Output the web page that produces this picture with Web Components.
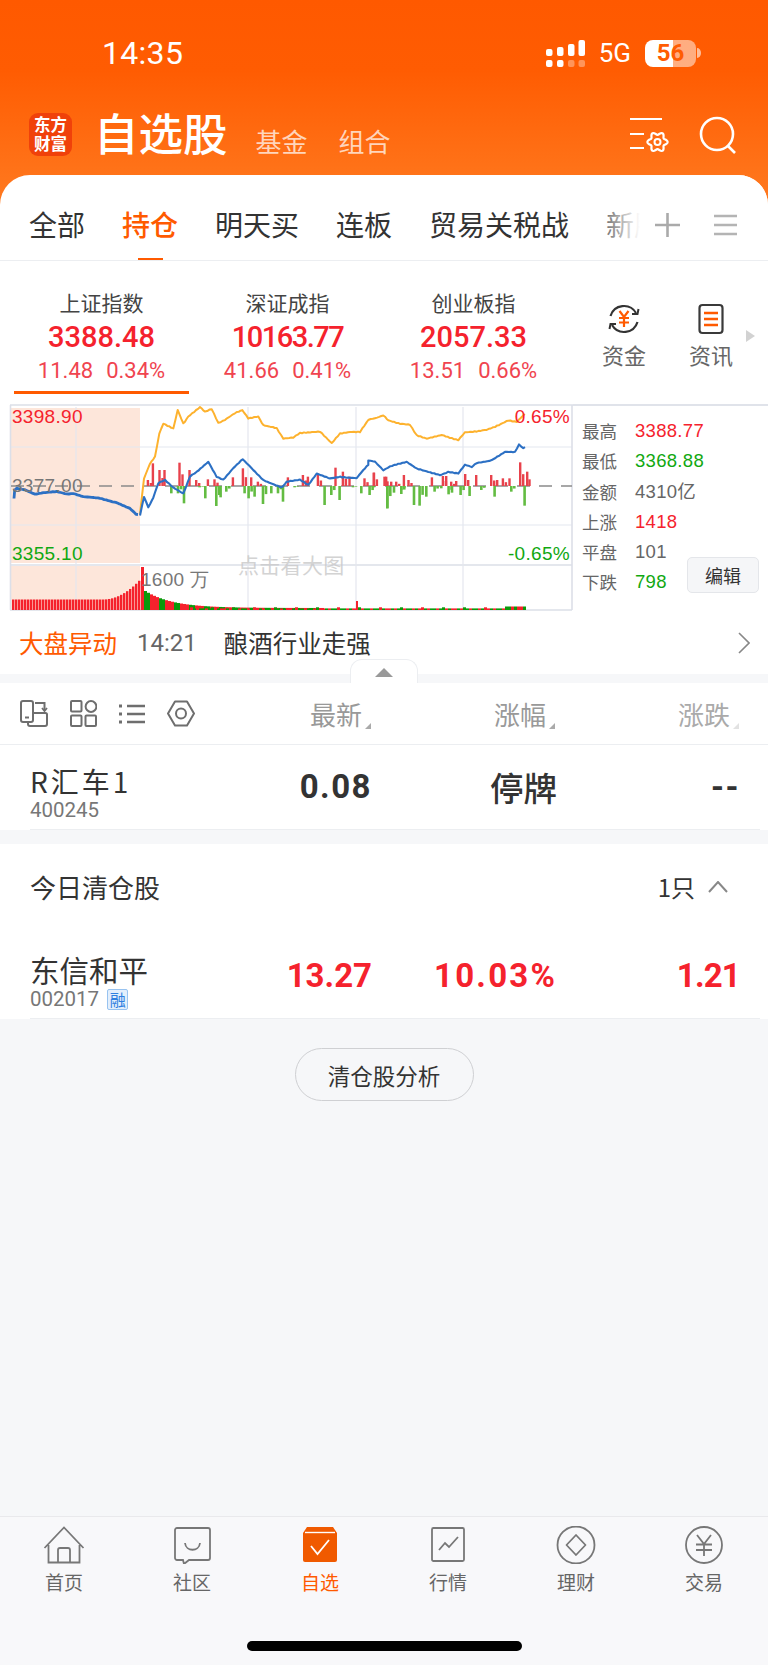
<!DOCTYPE html>
<html lang="zh">
<head>
<meta charset="utf-8">
<title>自选股</title>
<style>
  html, body { margin: 0; padding: 0; background: #f6f7f9; }
  body {
    width: 768px; height: 1665px; overflow: hidden;
    display: flex; flex-direction: column;
    font-family: "Noto Sans CJK SC", "Liberation Sans", sans-serif;
    color: #333;
  }
  .grow { flex: 1; }
</style>
</head>
<body>
  <app-top></app-top>
  <tab-strip></tab-strip>
  <index-board></index-board>
  <market-alert></market-alert>
  <list-head></list-head>
  <stock-row name="R汇车1" code="400245" price="0.08" pct="停牌" chg="--" tone="flat"></stock-row>
  <clear-head></clear-head>
  <stock-row name="东信和平" code="002017" price="13.27" pct="10.03%" chg="1.21" tone="up" badge="融" short></stock-row>
  <clear-button></clear-button>
  <div class="grow"></div>
  <bottom-nav></bottom-nav>

<script>
const NUM = '"Roboto", "Liberation Sans", sans-serif';
const CJK = '"Noto Sans CJK SC", "Liberation Sans", sans-serif';

// six lobed gear for the settings icon
function flowerPath(cx, cy) {
  let d = "";
  for (let i = 0; i <= 72; i++) {
    const t = i / 72 * Math.PI * 2;
    const r = 8.6 + 1.5 * Math.cos(6 * t);
    d += (i ? "L" : "M") + (cx + r * Math.cos(t)).toFixed(2) + " " + (cy + r * Math.sin(t)).toFixed(2);
  }
  return d + "z";
}

// status bar + orange title bar
class AppTop extends HTMLElement {
  constructor() {
    super();
    this.attachShadow({ mode: "open" }).innerHTML = `
    <style>
      :host { display: block; height: 205px; margin-bottom: -30px; color: #fff;
        background: linear-gradient(#ff5900 0, #ff5c02 70px, #ff7a20 205px); }
      .status { height: 105px; box-sizing: border-box; padding: 35px 67px 0 102px; display: flex; align-items: flex-start; justify-content: space-between; }
      .time { font: 400 32px/36px ${NUM}; letter-spacing: .3px; }
      .sys { display: flex; align-items: center; gap: 14px; height: 36px; }
      .net { font: 400 26px/36px ${NUM}; }
      .batt { display: flex; align-items: center; gap: 1px; }
      .cell { width: 51px; height: 27px; border-radius: 8px; font: 700 24px/27px ${NUM}; text-align: center; color: #ff5c02;
        background: linear-gradient(90deg, #fff 0 55%, rgba(255,255,255,.5) 55%); }
      .title { display: flex; align-items: center; height: 60px; padding: 0 31px 0 29px; }
      .logo { width: 43px; height: 43px; border-radius: 9px; background: #f0410a; color: #fff; margin: -2px 22px 0 0;
        font: 700 16.5px/19px "Noto Sans CJK SC", sans-serif; text-align: center; display: flex; align-items: center; justify-content: center; }
      h1 { margin: -6px 28px 0 0; font: 500 44.5px/60px ${CJK}; }
      .sub { font: 400 26px/43px ${CJK}; color: rgba(255,255,255,.72); margin-right: 31px; padding-top: 11px; height: 43px; }
      .icons { margin-left: auto; display: flex; align-items: center; gap: 30px; }
      svg { display: block; }
    </style>
    <div class="status">
      <span class="time">14:35</span>
      <div class="sys">
        <svg width="39" height="27" viewBox="0 0 39 27" fill="#fff">
          <rect x="0" y="9" width="6.500" height="7" rx="2"/><rect x="11" y="7" width="6.500" height="9" rx="2"/><rect x="22" y="4" width="6.500" height="12" rx="2"/><rect x="32.500" y="0" width="6.500" height="16" rx="2"/>
          <rect x="0" y="20" width="6.500" height="7" rx="2"/><rect x="11" y="20" width="6.500" height="7" rx="2"/><rect x="22" y="20" width="6.500" height="7" rx="2" opacity=".35"/><rect x="32.500" y="20" width="6.500" height="7" rx="2" opacity=".35"/>
        </svg>
        <span class="net">5G</span>
        <div class="batt"><span class="cell">56</span><svg width="4" height="10"><path d="M0 0a4 5 0 0 1 0 10z" fill="#fff" opacity=".6"/></svg></div>
      </div>
    </div>
    <div class="title">
      <div class="logo"><span>东方<br>财富</span></div>
      <h1>自选股</h1>
      <span class="sub">基金</span><span class="sub">组合</span>
      <div class="icons">
        <svg width="39" height="36" viewBox="0 0 39 36" fill="none" stroke="#fff" stroke-width="2.200">
          <path d="M0 2h32M0 17h14M0 31h14"/>
          <path d="${flowerPath(27.5, 25)}" stroke-linejoin="round"/>
          <circle cx="27.500" cy="25" r="3" stroke-width="2"/>
        </svg>
        <svg width="38" height="38" viewBox="0 0 38 38" fill="none" stroke="#fff" stroke-width="2.600">
          <circle cx="18" cy="18" r="16"/><path d="M29 30l7 7"/>
        </svg>
      </div>
    </div>`;
  }
}
customElements.define("app-top", AppTop);

// watchlist tabs on the white sheet
class TabStrip extends HTMLElement {
  constructor() {
    super();
    this.attachShadow({ mode: "open" }).innerHTML = `
    <style>
      :host { display: block; position: relative; height: 86px; background: #fff; border-radius: 30px 30px 0 0; box-sizing: border-box; border-bottom: 1px solid #eceef1; overflow: hidden; }
      .tabs { display: flex; gap: 37px; padding: 29px 0 0 29px; font: 400 28px/40px ${CJK}; color: #333; white-space: nowrap; }
      .on { color: #ff5a00; font-weight: 500; position: relative; }
      .on::after { content: ""; position: absolute; left: 16px; top: 54px; width: 25px; height: 3px; background: #ff5a00; }
      .fade { position: absolute; top: 0; left: 590px; right: 0; bottom: 0; background: linear-gradient(90deg, rgba(255,255,255,0), #fff 50px); }
      .tools { position: absolute; left: 655px; top: 38px; display: flex; gap: 34px; }
    </style>
    <div class="tabs"><span>全部</span><span class="on">持仓</span><span>明天买</span><span>连板</span><span>贸易关税战</span><span>新股</span></div>
    <div class="fade"></div>
    <div class="tools">
      <svg width="25" height="24" fill="none" stroke="#aaa" stroke-width="2.600"><path d="M0 12h25M12.500 0v24"/></svg>
      <svg width="23" height="24" fill="none" stroke="#b4b4b4" stroke-width="2.600"><path d="M0 3h23M0 12h23M0 21h23"/></svg>
    </div>`;
  }
}
customElements.define("tab-strip", TabStrip);

// one index summary in the top board
class IndexCard extends HTMLElement {
  constructor() {
    super();
    this.attachShadow({ mode: "open" }).innerHTML = `
    <style>
      :host { display: block; width: 186px; height: 133px; box-sizing: border-box; text-align: center; color: #f5222d; padding-top: 26px; }
      :host([active]) .wrap { border-bottom: 3px solid #ff5a00; }
      .wrap { width: 175px; margin-left: 14px; height: 107px; box-sizing: border-box; }
      .n { font: 400 21px/30px ${CJK}; color: #444; display: block; }
      .v { font: 500 29px/38px ${NUM}; display: block; margin-top: 1px; }
      .c { font: 400 22px/28px ${NUM}; display: flex; justify-content: center; gap: 13px; margin-top: 1px; color: #f0444f; }
    </style>
    <div class="wrap"><span class="n"></span><span class="v"></span><span class="c"><span class="d"></span><span class="p"></span></span></div>`;
  }
  connectedCallback() {
    const r = this.shadowRoot;
    r.querySelector(".n").textContent = this.getAttribute("name");
    const v = r.querySelector(".v");
    v.textContent = this.getAttribute("value");
    if (this.getAttribute("tight")) v.style.letterSpacing = this.getAttribute("tight") + "px";
    r.querySelector(".d").textContent = this.getAttribute("delta");
    r.querySelector(".p").textContent = this.getAttribute("pct");
  }
}
customElements.define("index-card", IndexCard);

// intraday mini chart, drawn on its own canvas
class MiniChart extends HTMLElement {
  constructor() {
    super();
    // a = points read off the left half of the chart, b = off the right half
    const a = (p) => p.map(([x, y]) => [x / 3, y / 3 - 4]);
    const b = (p) => p.map(([x, y]) => [370 + x / 3, y / 3 - 4]);
    const pts = (p, amp) => {
      const out = [];
      for (let i = 0; i < p.length - 1; i++) {
        const n = Math.max(1, Math.round((p[i + 1][0] - p[i][0]) / 2));
        for (let k = 0; k < n; k++) {
          const x = p[i][0] + (p[i + 1][0] - p[i][0]) * k / n;
          const y = p[i][1] + (p[i + 1][1] - p[i][1]) * k / n + amp * Math.sin(x * 2.3) * Math.cos(x * .9);
          out.push(x.toFixed(1) + "," + y.toFixed(1));
        }
      }
      return out.join(" ");
    };
    const pre = pts(a([[42,295],[44,270],[50,265],[75,270],[105,283],[130,278],[170,275],[200,282],[220,280],[250,290],[300,295],[350,308],[390,325],[408,342],[420,345]]), .3);
    const blue = pts(a([[420,345],[432,290],[445,322],[460,292],[475,250],[495,240],[520,262],[550,280],[570,230],[590,215],[625,185],[650,230],[670,240],[700,205],[728,178],[760,210],[790,240],[845,262],[860,245],[900,240],[925,255],[950,220],[990,235],[1020,230],[1070,235],[1090,210],[1105,195]])
      .concat(b([[-5,182],[15,185],[40,210],[60,200],[110,185],[140,205],[175,215],[210,225],[235,215],[265,220],[285,195],[305,200],[320,190],[345,185],[365,180],[405,155],[435,155],[447,133],[460,145],[470,137]])), .5);
    const orange = pts(a([[420,340],[432,235],[450,190],[465,170],[478,100],[490,70],[520,85],[533,30],[550,70],[565,50],[600,22],[615,35],[635,28],[655,68],[675,60],[705,40],[727,30],[745,55],[775,50],[790,75],[830,85],[850,115],[880,112],[900,100],[960,95],[995,130],[1020,100],[1050,95],[1080,95],[1100,68]])
      .concat(b([[-5,60],[15,55],[40,45],[55,62],[90,72],[120,75],[140,105],[170,115],[215,105],[265,120],[285,98],[320,95],[350,90],[375,80],[415,62],[440,65],[470,35]])), .6);

    // net inflow bars, read as [zoom x, zoom y of the bar end], baseline 258
    const redA = [[440,240],[455,190],[475,210],[490,210],[535,188],[565,210],[585,240],[620,238],[640,238],[695,232],[725,205],[750,232],[770,245],[860,232],[905,225],[920,230],[950,225],[1003,203],[1025,215],[1045,230],[1090,235],[1118,218],[1150,230],[1170,245]];
    const redB = [[8,218],[45,230],[75,245],[98,225],[112,240],[182,232],[215,228],[225,228],[240,245],[255,243],[282,222],[315,225],[360,225],[378,240],[395,235],[415,235],[447,187],[468,215],[475,238]];
    const grnA = [[510,280],[530,280],[548,310],[595,262],[612,295],[645,318],[658,292],[675,275],[730,280],[742,295],[760,290],[785,312],[810,280],[830,280],[845,305],[880,262],[970,315],[990,285],[1015,300],[1055,262],[1080,280],[1105,285],[1158,325],[1200,270]];
    const grnB = [[8,262],[48,325],[68,278],[90,282],[128,315],[145,317],[165,290],[190,275],[210,265],[232,283],[242,278],[268,285],[295,288],[330,270],[370,290],[420,275],[460,317]];
    const bar = (x, h, up, w) => `<rect x="${x.toFixed(1)}" y="${up ? 82 - h : 82}" width="${w}" height="${h}"/>`;
    let reds = "", greens = "";
    redA.map(p => [p[0] / 3, (258 - p[1]) / 3]).concat(redB.map(p => [370 + p[0] / 3, (258 - p[1]) / 3])).forEach(([x, h], i) => {
      reds += bar(x, h, true, 2.4);
      if (i < 42 && i % 2 === 0) reds += bar(x + 3, h * .5, true, 2.4);
    });
    grnA.map(p => [p[0] / 3, (p[1] - 258) / 3]).concat(grnB.map(p => [370 + p[0] / 3, (p[1] - 258) / 3])).forEach(([x, h], i) => {
      greens += bar(x, h, false, 2.6);
      if (i % 2 === 1) greens += bar(x + 3, h * .45, false, 2.6);
    });

    // volume histogram, baseline 206
    let vol = "";
    for (let i = 0; i < 43; i++) {
      const x = 12 + i * 3;
      const h = i < 30 ? 10.500 : 10.500 + (i - 30) * (i - 30) * .13;
      vol += `<rect x="${x}" y="${206 - h}" width="2.4" height="${h}" fill="#f5222d"/>`;
    }
    vol += `<rect x="141" y="163" width="3" height="43" fill="#f5222d"/>`;
    for (let i = 0; i < 60; i++) {
      const x = 144 + i * 3;
      const h = 2 + 17 * Math.exp(-i / 9);
      vol += `<rect x="${x}" y="${206 - h}" width="3" height="${h}" fill="${i === 0 || i % 5 < 2 ? "#0a9a0a" : "#f5222d"}"/>`;
    }
    for (let i = 0; i < 112; i++) {
      const x = 190 + i * 3;
      const h = i > 104 ? 3.500 : 1.600 + (i % 7 === 0 ? 1.100 : 0);
      vol += `<rect x="${x}" y="${206 - h}" width="3" height="${h}" fill="${(i * 7) % 11 < 5 ? "#f5222d" : "#0a9a0a"}"/>`;
    }
    vol += `<rect x="356" y="197" width="2" height="9" fill="#f5222d"/>`;

    this.attachShadow({ mode: "open" }).innerHTML = `
    <style>
      :host { display: block; width: 573px; height: 207px; flex: none; }
      svg { display: block; }
      text { font-family: "Liberation Sans", sans-serif; font-size: 19px; letter-spacing: .3px; }
    </style>
    <svg width="573" height="207" viewBox="0 0 573 207" fill="none">
      <rect x="11" y="4" width="129" height="155" fill="#fde6da"/>
      <rect x="11" y="162" width="129" height="44" fill="#fde6da"/>
      <g stroke="#e4e7ef" stroke-width="1.200">
        <path d="M76 3v157M248 3v157M356 3v157M463 3v157M76 162v44M248 162v44M356 162v44M463 162v44"/>
        <path d="M10 43h562M10 121h562"/>
      </g>
      <g stroke="#dcdfe8" stroke-width="1.600">
        <path d="M10 1h563M10 161h562M10 206h562M10.500 1v205M572 1v205"/>
      </g>
      <path d="M11 82h561" stroke="#8a8a8a" stroke-width="1.400" stroke-dasharray="13 9"/>
      <g fill="#e8424c">${reds}</g>
      <g fill="#63bc42">${greens}</g>
      <polyline points="${orange}" stroke="#fdb22e" stroke-width="2" stroke-linejoin="round"/>
      <polyline points="${blue}" stroke="#2c70c4" stroke-width="2.100" stroke-linejoin="round"/>
      <polyline points="${pre}" stroke="#2c70c4" stroke-width="2.800" stroke-linejoin="round"/>
      ${vol}
      <text x="12" y="18.500" fill="#f5222d">3398.90</text>
      <text x="12" y="87.500" fill="#777">3377.00</text>
      <text x="12" y="155.500" fill="#11a811">3355.10</text>
      <text x="570" y="18.500" fill="#f5222d" text-anchor="end">0.65%</text>
      <text x="570" y="155.500" fill="#11a811" text-anchor="end">-0.65%</text>
      <text x="141" y="181.500" fill="#777">1600 万</text>
      <text x="238" y="169" fill="#c9c9c9" style="font-family:'Noto Sans CJK SC',sans-serif;font-size:21px;opacity:.8">点击看大图</text>
    </svg>`;
  }
}
customElements.define("mini-chart", MiniChart);

// high / low / breadth list right of the chart
class StatList extends HTMLElement {
  constructor() {
    super();
    const rows = [["最高","3388.77","#f5222d"],["最低","3368.88","#11a811"],["金额","4310亿","#666"],["上涨","1418","#f5222d"],["平盘","101","#666"],["下跌","798","#11a811"]];
    this.attachShadow({ mode: "open" }).innerHTML = `
    <style>
      :host { display: block; position: relative; width: 195px; height: 207px; box-sizing: border-box; padding: 10px 0 0 9px; border-top: 2px solid #e0e3ea; }
      .r { display: flex; height: 30.300px; font: 400 17.500px/30px ${CJK}; color: #666; }
      .r b { width: 53px; font-weight: 400; }
      .r span { font-family: "Liberation Sans", "Noto Sans CJK SC", sans-serif; font-size: 18.500px; letter-spacing: .3px; }
      button { position: absolute; left: 114px; top: 151px; width: 72px; height: 36px; box-sizing: border-box; padding: 0; border: 1px solid #e4e6ea; border-radius: 5px; background: #f5f6f8; color: #333; font: 400 18px/34px ${CJK}; }
    </style>
    ${rows.map(r => `<div class="r"><b>${r[0]}</b><span style="color:${r[2]}">${r[1]}</span></div>`).join("")}
    <button>编辑</button>`;
  }
}
customElements.define("stat-list", StatList);

class IndexBoard extends HTMLElement {
  constructor() {
    super();
    this.attachShadow({ mode: "open" }).innerHTML = `
    <style>
      :host { display: block; position: relative; background: #fff; }
      .top { display: flex; height: 143px; }
      .gap { width: 22.500px; }
      .tool { width: 87px; text-align: center; padding-top: 42px; font: 400 22px/30px ${CJK}; color: #666; box-sizing: border-box; }
      .tool svg { display: block; margin: 0 auto 4px; }
      .more { margin: 69px 0 0 -8.500px; }
      .mid { display: flex; }
    </style>
    <div class="top">
      <index-card active name="上证指数" value="3388.48" delta="11.48" pct="0.34%"></index-card>
      <index-card name="深证成指" value="10163.77" tight="-1.500" delta="41.66" pct="0.41%"></index-card>
      <index-card name="创业板指" value="2057.33" delta="13.51" pct="0.66%"></index-card>
      <div class="gap"></div>
      <div class="tool">
        <svg width="32" height="32" viewBox="0 0 32 32" fill="none" stroke="#333" stroke-width="2.200">
          <path d="M2.500 13A14 14 0 0 1 28 10M29.500 19A14 14 0 0 1 4 22"/><path d="M24 11h5.500l1-5M8 21H2.500l-1 5" stroke-width="2"/>
          <path d="M11.500 8l4.500 6 4.500-6M16 14v10M11 15h10M11 19.500h10" stroke="#ff5a00" stroke-width="2.200"/>
        </svg>
        资金
      </div>
      <div class="tool">
        <svg width="26" height="32" viewBox="0 0 26 32" fill="none" stroke="#3a3a3a" stroke-width="2.200">
          <rect x="1.500" y="2" width="23" height="28" rx="3"/>
          <path d="M6 10h14M6 16h14M6 22h14" stroke="#ff5a00" stroke-width="2.400"/>
        </svg>
        资讯
      </div>
      <svg class="more" width="9" height="12"><path d="M0 0l9 6L0 12z" fill="#d2d2d2"/></svg>
    </div>
    <div class="mid"><mini-chart></mini-chart><stat-list></stat-list></div>`;
  }
}
customElements.define("index-board", IndexBoard);

class MarketAlert extends HTMLElement {
  constructor() {
    super();
    this.attachShadow({ mode: "open" }).innerHTML = `
    <style>
      :host { display: block; position: relative; height: 63px; background: #fff; }
      .row { display: flex; align-items: center; height: 64px; padding: 0 0 0 19px; }
      .a { color: #ff5a00; font: 400 24.500px/34px ${CJK}; }
      .t { color: #666; font: 400 24px/34px ${NUM}; margin: 0 27px 0 20px; }
      .m { color: #333; font: 400 24.500px/34px ${CJK}; }
      svg { margin-left: auto; margin-right: 18px; }
      .handle { position: absolute; left: 350px; top: 48px; width: 68px; height: 24px; box-sizing: border-box; background: #fff; border: 1px solid #eceef1; border-bottom: 0; border-radius: 12px 12px 0 0; }
      .handle::after { content: ""; position: absolute; left: 24px; top: 8px; border: 9px solid transparent; border-top: 0; border-bottom-color: #999; }
    </style>
    <div class="row"><span class="a">大盘异动</span><span class="t">14:21</span><span class="m">酿酒行业走强</span>
      <svg width="12" height="22" fill="none" stroke="#888" stroke-width="1.600"><path d="M1 1l10 10L1 21"/></svg>
    </div>
    <div class="handle"></div>`;
  }
}
customElements.define("market-alert", MarketAlert);

class ListHead extends HTMLElement {
  constructor() {
    super();
    this.attachShadow({ mode: "open" }).innerHTML = `
    <style>
      :host { display: flex; position: relative; height: 62px; margin-top: 9px; background: #fff; border-bottom: 1px solid #eceef1; box-sizing: border-box; align-items: center; }
      .icons { display: flex; gap: 22px; padding-left: 20px; width: 310px; box-sizing: border-box; align-items: center; }
      .h { position: relative; font: 400 26px/36px ${CJK}; color: #999; margin-right: 132px; }
      .h::after { content: ""; position: absolute; right: -9px; bottom: 3px; border-left: 6px solid transparent; border-bottom: 6px solid #aaa; }
      .h.last { color: #aaa; margin: 0; }
      .h.last::after { border-bottom-color: #e2e2e2; }
      svg { display: block; }
    </style>
    <div class="icons">
      <svg width="28" height="27" viewBox="0 0 28 27" fill="none" stroke="#6e6e6e" stroke-width="2">
        <rect x="1" y="1" width="12" height="21" rx="2"/><path d="M5 17.500h4"/>
        <path d="M13 13h12.500a1.500 1.500 0 0 1 1.500 1.500V24a2 2 0 0 1-2 2H10a2 2 0 0 1-2-2v-2"/>
        <path d="M15 3h9.500V10"/><path d="M22 8l2.500 3 2.500-3" stroke-width="1.800"/>
      </svg>
      <svg width="27" height="27" viewBox="0 0 27 27" fill="none" stroke="#6e6e6e" stroke-width="2">
        <rect x="1" y="1" width="10.500" height="10.500" rx="1"/><circle cx="21" cy="6.500" r="5.400"/><rect x="1" y="15.500" width="10.500" height="10.500" rx="1"/><rect x="15.500" y="15.500" width="10.500" height="10.500" rx="1"/>
      </svg>
      <svg width="26" height="20" viewBox="0 0 26 20" fill="none" stroke="#6e6e6e" stroke-width="2.400">
        <path d="M8 2h18M8 10h18M8 18h18"/><path d="M0 2h3M0 10h3M0 18h3" stroke-width="3"/>
      </svg>
      <svg width="28" height="27" viewBox="0 0 28 27" fill="none" stroke="#6e6e6e" stroke-width="2">
        <path d="M8 1.500h12l7 12-7 12H8l-7-12z" stroke-linejoin="round"/><circle cx="14" cy="13.500" r="5"/>
      </svg>
    </div>
    <span class="h">最新</span><span class="h">涨幅</span><span class="h last">涨跌</span>`;
  }
}
customElements.define("list-head", ListHead);

// one quote row: name, code, three right-aligned numbers
class StockRow extends HTMLElement {
  constructor() {
    super();
    this.attachShadow({ mode: "open" });
  }
  connectedCallback() {
    const a = (k) => this.getAttribute(k) || "";
    const badge = a("badge") ? `<i>${a("badge")}</i>` : "";
    const up = a("tone") === "up";
    const short = this.hasAttribute("short");
    this.shadowRoot.innerHTML = `
    <style>
      :host { display: block; background: #fff; }
      .row { display: flex; height: ${short ? 90 : 85}px; margin: 0 8px 0 30px; box-sizing: border-box; border-bottom: 1px solid #eceef1; position: relative; }
      .left { width: 236px; padding-top: ${short ? 24 : 21}px; }
      .name { font: 400 ${up ? 29.500 : 28}px/${up ? 32 : 30}px ${CJK}; color: #333; display: block; white-space: nowrap; letter-spacing: ${up ? 0 : 3}px; }
      .code { font: 400 20.500px/22px ${NUM}; color: #777; display: flex; align-items: center; gap: 8px; margin-top: 3px; }
      i { font: normal 400 16px/19px ${CJK}; color: #2f80e0; background: #e3effc; border: 1px solid #98c3f0; border-radius: 2px; width: 21px; height: 21px; text-align: center; box-sizing: border-box; display: block; }
      .v { position: absolute; top: ${short ? 27 : 22}px; font: 700 33px/40px ${NUM}; color: ${up ? "#f5222d" : "#333"}; white-space: nowrap; }
      .p { right: 388px; } .q { right: 203px; } .c { right: 20px; }
      .wide { letter-spacing: 1.500px; }
      .q.wide { letter-spacing: 2.200px; }
      .c.narrow { letter-spacing: -.8px; }
      .q.zh { font: 500 33.500px/40px ${CJK}; }
    </style>
    <div class="row">
      <div class="left"><span class="name">${a("name")}</span><span class="code">${a("code")}${badge}</span></div>
      <span class="v p ${up ? "" : "wide"}">${a("price")}</span>
      <span class="v q ${up ? "wide" : "zh"}">${a("pct")}</span>
      <span class="v c ${up ? "narrow" : "wide"}">${a("chg")}</span>
    </div>`;
  }
}
customElements.define("stock-row", StockRow);

class ClearHead extends HTMLElement {
  constructor() {
    super();
    this.attachShadow({ mode: "open" }).innerHTML = `
    <style>
      :host { display: flex; align-items: center; justify-content: space-between; height: 85px; margin-top: 14px; padding: 0 40px 0 30px; background: #fff; font: 400 26px/36px ${CJK}; color: #333; box-sizing: border-box; }
      .r { display: flex; align-items: center; gap: 13px; font-size: 24px; }
    </style>
    <span>今日清仓股</span>
    <span class="r"><span>1只</span><svg width="20" height="12" fill="none" stroke="#888" stroke-width="2"><path d="M1 11l9-10 9 10"/></svg></span>`;
  }
}
customElements.define("clear-head", ClearHead);

class ClearButton extends HTMLElement {
  constructor() {
    super();
    this.attachShadow({ mode: "open" }).innerHTML = `
    <style>
      :host { display: flex; justify-content: center; padding-top: 29px; }
      button { width: 179px; height: 53px; border-radius: 27px; border: 1px solid #cfd0d3; background: #f6f7f9; color: #333; font: 400 22.500px/50px ${CJK}; padding: 0; }
    </style>
    <button>清仓股分析</button>`;
  }
}
customElements.define("clear-button", ClearButton);

// bottom tab bar with home indicator
class BottomNav extends HTMLElement {
  constructor() {
    super();
    const items = [
      ["首页", `<path d="M1.500 22L21 1.500 40.500 22M5.500 19V36.500H36.500V19M15 36.500V24a2 2 0 0 1 2-2h8a2 2 0 0 1 2 2V36.500"/>`],
      ["社区", `<path d="M6 2H37a2 2 0 0 1 2 2V32a2 2 0 0 1-2 2H18l-5 4-1-4H6a2 2 0 0 1-2-2V4a2 2 0 0 1 2-2z"/><path d="M14 17c1 9 14 9 15 0"/>`],
      ["自选", `<path d="M8 1H34l4 6V34a2 2 0 0 1-2 2H6a2 2 0 0 1-2-2V7z" fill="#f05a00" stroke="none"/><path d="M6 6.500H36" stroke="#fff" stroke-width="1.400"/><path d="M12 20l6.500 8L30 14" stroke="#fff" stroke-width="1.800"/>`],
      ["行情", `<rect x="5" y="2" width="32" height="33" rx="1.500"/><path d="M12 24l6-7 4 4 9-10"/>`],
      ["理财", `<circle cx="21" cy="19" r="18.500"/><path d="M21 9l9.500 10L21 29l-9.500-10z" stroke-linejoin="round"/>`],
      ["交易", `<circle cx="21" cy="19" r="18"/><path d="M14 9l7 9 7-9M21 18V30M13 18.500h16M13 24h16"/>`],
    ];
    this.attachShadow({ mode: "open" }).innerHTML = `
    <style>
      :host { display: block; height: 149px; flex: none; background: #f8f8fa; border-top: 1px solid #e9e9ec; box-sizing: border-box; position: relative; }
      .nav { display: grid; grid-template-columns: repeat(6, 128px); padding-top: 9px; }
      .it { display: flex; flex-direction: column; align-items: center; font: 400 19px/28px ${CJK}; color: #666; }
      .it.on { color: #ff5a00; }
      svg { display: block; margin-bottom: 4px; }
      .bar { width: 275px; height: 10px; border-radius: 5px; background: #000; margin: 45px auto 0; }
    </style>
    <div class="nav">
      ${items.map((it, i) => `<div class="it ${i === 2 ? "on" : ""}"><svg width="42" height="38" viewBox="0 0 42 38" fill="none" stroke="#777" stroke-width="1.800">${it[1]}</svg>${it[0]}</div>`).join("")}
    </div>
    <div class="bar"></div>`;
  }
}
customElements.define("bottom-nav", BottomNav);
</script>
</body>
</html>
